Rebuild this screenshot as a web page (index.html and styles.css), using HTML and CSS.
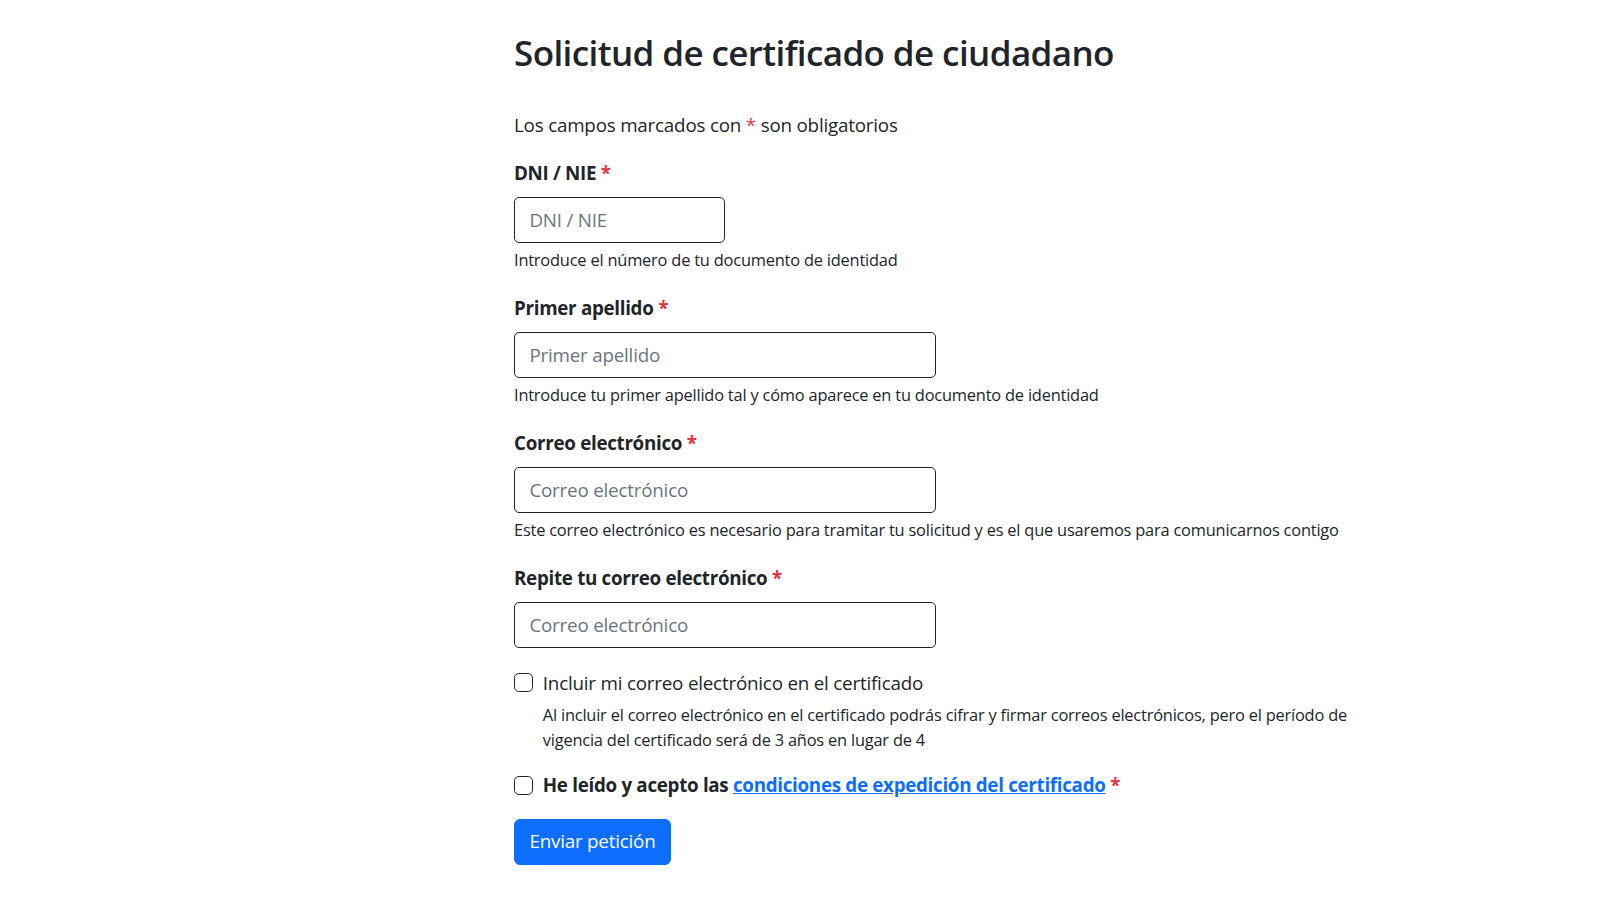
FILE: index.html
```html
<!DOCTYPE html>
<html lang="es">
<head>
<meta charset="utf-8">
<title>Solicitud de certificado de ciudadano</title>
<link rel="stylesheet" href="styles.css">
</head>
<body>
<main class="page">
  <h1 class="title">Solicitud de certificado de ciudadano</h1>
  <p class="intro">Los campos marcados con <span class="req">*</span> son obligatorios</p>
  <form class="form">
    <div class="group">
      <label class="label" for="dni">DNI / NIE <span class="req">*</span></label>
      <input class="input input-sm" id="dni" type="text" placeholder="DNI / NIE">
      <div class="help">Introduce el número de tu documento de identidad</div>
    </div>
    <div class="group">
      <label class="label" for="ape">Primer apellido <span class="req">*</span></label>
      <input class="input" id="ape" type="text" placeholder="Primer apellido">
      <div class="help">Introduce tu primer apellido tal y cómo aparece en tu documento de identidad</div>
    </div>
    <div class="group">
      <label class="label" for="mail">Correo electrónico <span class="req">*</span></label>
      <input class="input" id="mail" type="email" placeholder="Correo electrónico">
      <div class="help">Este correo electrónico es necesario para tramitar tu solicitud y es el que usaremos para comunicarnos contigo</div>
    </div>
    <div class="group">
      <label class="label" for="mail2">Repite tu correo electrónico <span class="req">*</span></label>
      <input class="input" id="mail2" type="email" placeholder="Correo electrónico">
    </div>
    <div class="check">
      <input class="check-box" id="inc" type="checkbox">
      <label class="check-label" for="inc">Incluir mi correo electrónico en el certificado</label>
      <div class="help">Al incluir el correo electrónico en el certificado podrás cifrar y firmar correos electrónicos, pero el período de vigencia del certificado será de 3 años en lugar de 4</div>
    </div>
    <div class="check">
      <input class="check-box" id="acc" type="checkbox">
      <label class="check-label strong" for="acc">He leído y acepto las <a href="#" class="link">condiciones de expedición del certificado</a> <span class="req">*</span></label>
    </div>
    <button class="btn" type="button">Enviar petición</button>
  </form>
</main>
</body>
</html>
```
FILE: styles.css
```css
* { box-sizing: border-box; }
html, body { margin: 0; padding: 0; background: #fff; }
body {
  font-family: "Open Sans", "Noto Sans", sans-serif;
  font-size: 18.8px;
  letter-spacing: -0.2px;
  line-height: 1.53;
  color: #212529;
}
.page {
  padding: 30px 0 0 514px;
  width: 1384px;
}
.title {
  margin: 0 0 35px;
  font-size: 35px;
  font-weight: 600;
  line-height: 46px;
  letter-spacing: -0.6px;
}
.intro { margin: 0 0 19px; }
.req { color: #dc3545; }
.group { margin-bottom: 21px; }
.label {
  display: block;
  font-weight: 700;
  letter-spacing: -0.3px;
  margin-bottom: 9.6px;
}
.input {
  display: block;
  width: 422px;
  height: 45.6px;
  padding: 7.2px 14.4px;
  font: inherit;
  letter-spacing: -0.2px;
  color: #212529;
  border: 1.2px solid #212529;
  border-radius: 5px;
  background: #fff;
}
.input::placeholder { color: #6c757d; opacity: 1; }
.input-sm { width: 211px; }
.help {
  margin-top: 4.8px;
  font-size: 16.4px;
  letter-spacing: -0.2px;
  line-height: 25.2px;
  color: #212529;
}
.check {
  position: relative;
  padding-left: 28.8px;
  margin-bottom: 19px;
  width: 870px;
}
.check-box {
  appearance: none;
  -webkit-appearance: none;
  position: absolute;
  left: 0;
  top: 4.8px;
  width: 19.2px;
  height: 19.2px;
  margin: 0;
  border: 1.2px solid #212529;
  border-radius: 4.8px;
  background: #fff;
}
.check-label { display: block; }
.check-label.strong { font-weight: 700; letter-spacing: -0.3px; }
.link { color: #0d6efd; text-decoration: underline; }
.btn {
  display: inline-block;
  font: inherit;
  letter-spacing: -0.2px;
  color: #fff;
  background: #0d6efd;
  border: 1.2px solid #0d6efd;
  border-radius: 6px;
  padding: 7.2px 14.4px;
  line-height: 29.5px;
}
```
